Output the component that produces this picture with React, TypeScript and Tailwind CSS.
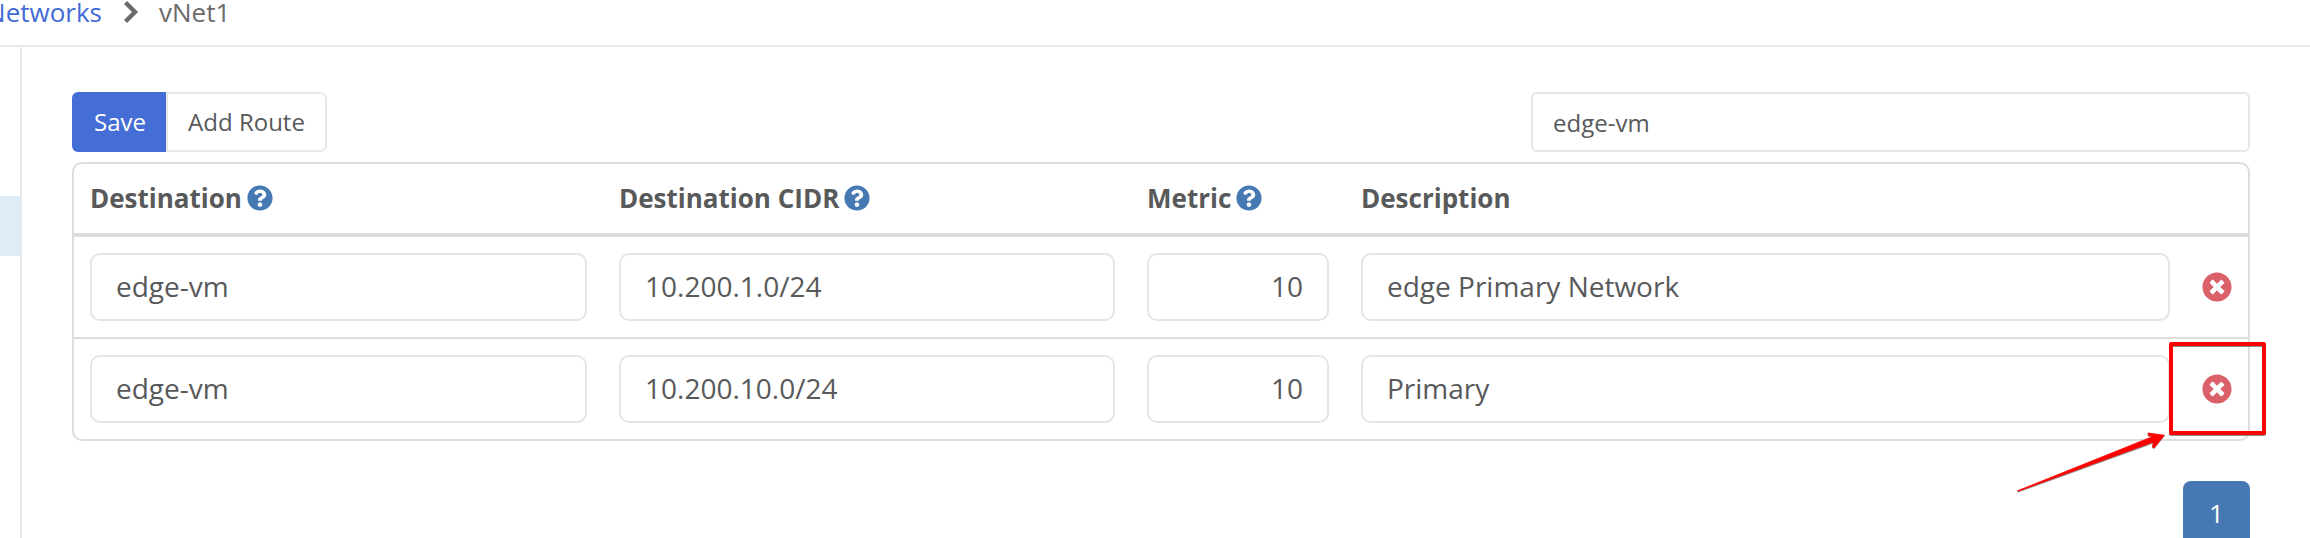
import React from "react";
import { FaQuestionCircle, FaTimesCircle } from "react-icons/fa";

type Route = { destination: string; cidr: string; metric: string; description: string };

const routes: Route[] = [
  { destination: "edge-vm", cidr: "10.200.1.0/24", metric: "10", description: "edge Primary Network" },
  { destination: "edge-vm", cidr: "10.200.10.0/24", metric: "10", description: "Primary" },
];

const grid = "grid grid-cols-[497px_496px_182px_809px_1fr] gap-x-8 pl-4";

function Heading({ label, help }: { label: string; help?: boolean }) {
  return (
    <div className="flex items-center gap-[6px] pb-[2px] text-[26px] font-bold leading-none">
      <span>{label}</span>
      {help && <FaQuestionCircle className="-ml-px size-[26px] text-[#4678b4]" />}
    </div>
  );
}

function Field({ value, right }: { value: string; right?: boolean }) {
  return (
    <input
      readOnly
      value={value}
      className={
        "block h-[68px] w-full min-w-0 rounded-[10px] border-2 border-[#e5e5e5] bg-white px-6 pb-[2px] text-[28px] outline-none " +
        (right ? "text-right" : "text-left")
      }
    />
  );
}

export default function App() {
  return (
    <div className="relative flex h-[538px] w-[2310px] flex-col overflow-hidden bg-white font-['Open_Sans',sans-serif] text-[#58595a]">
      <header className="flex h-[47px] shrink-0 border-b-2 border-[#e9e9e9]">
        <nav className="-ml-[10px] flex h-[24px] items-center text-[26px] leading-none text-[#6b6b6b]">
          <a className="flex w-[112px] justify-end whitespace-nowrap text-[#426bd6]">Networks</a>
          <svg className="ml-[21px] h-6 w-[16px]" viewBox="0 0 16 24" fill="none" stroke="#6b6b6b" strokeWidth="4.4">
            <path d="M2.5 2.5 L12 12 L2.5 21.5" />
          </svg>
          <span className="ml-[20px]">vNet1</span>
        </nav>
      </header>

      <div className="flex min-h-0 flex-1">
        <aside className="w-[22px] shrink-0 border-r-2 border-[#e9e9e9] pt-[149px]">
          <div className="h-[60px] bg-[#deecf7]" />
        </aside>

        <main className="flex w-[2228px] shrink-0 flex-col pt-[45px] pl-[50px]">
          <div className="flex justify-between">
            <div className="flex h-[60px] text-2xl">
              <button className="w-[94px] rounded-l-[6px] bg-[#446dd5] pb-[1px] pl-[2px] text-white">Save</button>
              <button className="w-[161px] rounded-r-[6px] border-2 border-[#e9e9e9] pb-[1px]">Add Route</button>
            </div>
            <input
              readOnly
              value="edge-vm"
              className="h-[60px] w-[719px] rounded-[6px] border-2 border-[#e5e5e5] px-5 text-2xl outline-none"
            />
          </div>

          <section className="mt-[10px] rounded-[10px] border-2 border-[#dddddd]">
            <div className={grid + " h-[73px] border-b-4 border-[#dddddd]"}>
              <Heading label="Destination" help />
              <Heading label="Destination CIDR" help />
              <Heading label="Metric" help />
              <Heading label="Description" />
            </div>
            {routes.map((r, i) => (
              <div key={i} className={grid + " items-center py-4 " + (i > 0 ? "border-t-2 border-[#dddddd]" : "")}>
                <Field value={r.destination} />
                <Field value={r.cidr} />
                <Field value={r.metric} right />
                <Field value={r.description} />
                <button className="flex pb-[1px]" aria-label="Delete">
                  <FaTimesCircle className="size-[30px] text-[#da6069]" />
                </button>
              </div>
            ))}
          </section>

          <div className="mt-10 flex justify-end">
            <button className="h-[67px] w-[67px] shrink-0 rounded-[8px] bg-[#4678b4] pb-[3px] text-[26px] text-white">1</button>
          </div>
        </main>
      </div>

      <svg className="pointer-events-none absolute top-[330px] left-[2000px]" width="290" height="180" viewBox="2000 330 290 180">
        <g fill="#444" stroke="#444" opacity="0.6">
          <rect x="2171" y="345" width="93" height="89" fill="none" strokeWidth="4" strokeLinejoin="round" />
          <path
            strokeWidth="0.5"
            strokeLinejoin="round"
            d="M2017.3 491.8 L2149 439 L2153 437.2 L2148.3 436.2 L2148 433.8 L2164.5 436 L2154 448.8 L2152.3 447.8 L2153 443.2 L2148 445.2 L2018 492.2 Z"
          />
        </g>
        <rect x="2171" y="344" width="93" height="89" fill="none" stroke="#ff0000" strokeWidth="4" strokeLinejoin="round" />
        <path
          fill="#ff0000"
          stroke="#ff0000"
          strokeWidth="0.8"
          strokeLinejoin="round"
          d="M2017.5 490.8 L2148 438.4 L2153 436.4 L2148.3 435.4 L2148 433 L2164.3 435.2 L2154 448 L2152.5 447 L2153.5 442 L2148 444 L2018 491.2 Z"
        />
      </svg>
    </div>
  );
}
